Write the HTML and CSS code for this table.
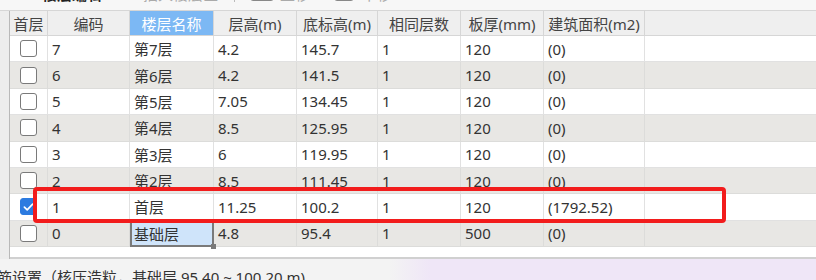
FILE: index.html
```html
<!DOCTYPE html>
<html lang="zh">
<head>
<meta charset="utf-8">
<link rel="stylesheet" href="styles.css">
</head>
<body>
<div class="toolbar">
  <div class="tb-row">
    <span class="tb-icon sq"></span><span class="tb-text dark">楼层编辑</span>
    <span class="tb-icon rd"></span><span class="tb-text light">插入楼层区</span>
    <span class="tb-sep"></span>
    <span class="tb-icon box"></span><span class="tb-text light">上移</span>
    <span class="tb-icon box small"></span><span class="tb-text light">下移</span>
  </div>
</div>
<div class="main">
  <div class="leftstrip"></div>
  <div class="panel">
    <div class="grid">
      <div class="h">首层</div><div class="h">编码</div><div class="h active">楼层名称</div><div class="h">层高(m)</div><div class="h">底标高(m)</div><div class="h">相同层数</div><div class="h">板厚(mm)</div><div class="h">建筑面积(m2)</div><div class="h blank"></div>

      <div class="c ck"><span class="cb"></span></div><div class="c">7</div><div class="c">第7层</div><div class="c">4.2</div><div class="c">145.7</div><div class="c">1</div><div class="c">120</div><div class="c">(0)</div><div class="c"></div>

      <div class="c g ck"><span class="cb"></span></div><div class="c g">6</div><div class="c g">第6层</div><div class="c g">4.2</div><div class="c g">141.5</div><div class="c g">1</div><div class="c g">120</div><div class="c g">(0)</div><div class="c g"></div>

      <div class="c ck"><span class="cb"></span></div><div class="c">5</div><div class="c">第5层</div><div class="c">7.05</div><div class="c">134.45</div><div class="c">1</div><div class="c">120</div><div class="c">(0)</div><div class="c"></div>

      <div class="c g ck"><span class="cb"></span></div><div class="c g">4</div><div class="c g">第4层</div><div class="c g">8.5</div><div class="c g">125.95</div><div class="c g">1</div><div class="c g">120</div><div class="c g">(0)</div><div class="c g"></div>

      <div class="c ck"><span class="cb"></span></div><div class="c">3</div><div class="c">第3层</div><div class="c">6</div><div class="c">119.95</div><div class="c">1</div><div class="c">120</div><div class="c">(0)</div><div class="c"></div>

      <div class="c g ck"><span class="cb"></span></div><div class="c g">2</div><div class="c g">第2层</div><div class="c g">8.5</div><div class="c g">111.45</div><div class="c g">1</div><div class="c g">120</div><div class="c g">(0)</div><div class="c g"></div>

      <div class="c ck"><span class="cb on"><svg viewBox="0 0 16 16" width="16" height="16"><path d="M3.6 8.2 L6.6 11.1 L12.4 4.9" fill="none" stroke="#fff" stroke-width="1.8" stroke-linecap="round" stroke-linejoin="round"/></svg></span></div><div class="c">1</div><div class="c">首层</div><div class="c">11.25</div><div class="c">100.2</div><div class="c">1</div><div class="c">120</div><div class="c">(1792.52)</div><div class="c"></div>

      <div class="c g ck"><span class="cb"></span></div><div class="c g">0</div><div class="c sel">基础层</div><div class="c g">4.8</div><div class="c g">95.4</div><div class="c g">1</div><div class="c g">500</div><div class="c g">(0)</div><div class="c g"></div>
    </div>
  </div>
</div>
<div class="status"><span class="status-text">筋设置（核压造粒，基础层 95.40 ~ 100.20 m)</span></div>
<div class="highlight"></div>
</body>
</html>
```
FILE: styles.css
```css
* { box-sizing: border-box; }
html, body { margin: 0; padding: 0; }
body {
  width: 816px;
  height: 280px;
  overflow: hidden;
  background: #f0f0f0;
  font-family: "Noto Sans", "Noto Sans CJK SC", sans-serif;
  font-size: 15px;
  color: #333;
  position: relative;
}

/* toolbar (mostly cut off at the top) */
.toolbar {
  height: 11px;
  overflow: hidden;
  background: #f7f7f7;
  border-bottom: 1px solid #d6d6d6;
}
.tb-row {
  display: flex;
  align-items: center;
  height: 24px;
  margin-top: -19px;
  padding-left: 25px;
}
.tb-icon {
  display: inline-block;
  border: 1px solid #666;
  background: #fff;
}
.tb-icon.sq { width: 8px; height: 14px; border-radius: 2px; margin-right: 9px; }
.tb-icon.rd { width: 9px; height: 14px; border-radius: 50%; border-color: #aaa; margin-left: 26px; margin-right: 6px; }
.tb-icon.box { width: 24px; height: 16px; border-radius: 3px; border-color: #888; margin-right: 6px; }
.tb-icon.box.small { width: 20px; margin-left: 24px; margin-right: 8px; }
.tb-text { font-size: 15px; white-space: nowrap; }
.tb-text.dark { color: #222; font-weight: bold; }
.tb-text.light { color: #aaa; }
.tb-sep { width: 1px; height: 18px; background: #bbb; margin: 0 15px 0 16px; }

/* main area */
.main {
  display: flex;
  height: 248px;
}
.leftstrip {
  width: 10px;
  background: #ededed;
  border-right: 1px solid #b9b9b9;
}
.panel {
  flex: 1;
  background: #fff;
  border-bottom: 2px solid #d0d0d0;
}
.grid {
  display: grid;
  grid-template-columns: 38px 82px 84px 83px 81px 83px 83px 101px 1fr;
  grid-template-rows: 25px repeat(8, 26.375px);
}
.h {
  background: #efefef;
  border-right: 1px solid #d6d6d6;
  border-bottom: 1px solid #d6d6d6;
  color: #444;
  display: flex;
  align-items: center;
  justify-content: center;
  white-space: nowrap;
}
.h.active { background: #7cb8f4; color: #fff; }
.h.blank { border-right: none; }
.c {
  background: #fff;
  border-right: 1px solid #e1e1e1;
  border-bottom: 1px solid #e1e1e1;
  display: flex;
  align-items: center;
  padding-left: 4px;
  white-space: nowrap;
  color: #333;
}
.c.g { background: #e8e7e4; border-color: #dcdcda; }
.c:nth-child(9n) { border-right: none; }
.c.ck { justify-content: center; padding-left: 0; }
.cb {
  width: 17px;
  height: 17px;
  border: 1px solid #7a7a7a;
  border-radius: 3px;
  background: #fff;
  display: flex;
  align-items: center;
  justify-content: center;
}
.cb.on { background: #2c7be0; border-color: #2c7be0; }
.c.sel {
  background: #cfe4fa;
  border: 2px solid #7a7a7a;
  padding-left: 2px;
  position: relative;
}
.c.sel::after {
  content: "";
  position: absolute;
  right: -4px;
  bottom: -4px;
  width: 5px;
  height: 5px;
  background: #7a7a7a;
}

/* status bar */
.status {
  height: 21px;
  background: linear-gradient(90deg, #f3f3f3 0, #f3f3f3 390px, #efe6f7 430px, #efe6f7 100%);
  padding-top: 7px;
  overflow: hidden;
}
.status-text {
  display: block;
  margin-left: -3px;
  white-space: nowrap;
  color: #333;
}

/* red annotation box over the 首层 row */
.highlight {
  position: absolute;
  left: 33px;
  top: 187px;
  width: 693px;
  height: 36px;
  border: 4px solid #f21c1c;
  border-radius: 4px;
}
```
